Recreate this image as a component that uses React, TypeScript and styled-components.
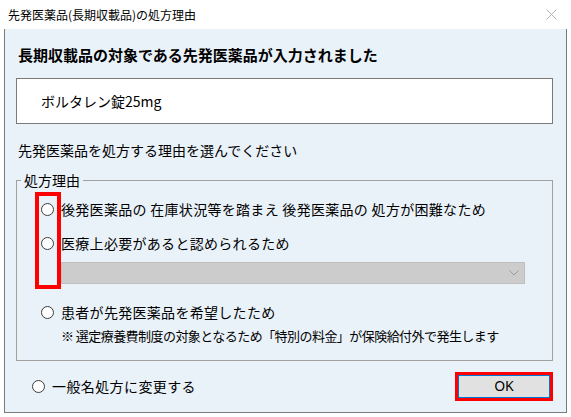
import React from 'react'
import styled, { createGlobalStyle } from 'styled-components'

const GlobalStyle = createGlobalStyle`
    html, body {
        margin: 0;
        padding: 0;
        background: #ffffff;
    }
    body {
        font-family: "Noto Sans CJK JP", "Noto Sans", sans-serif;
        color: #000000;
    }
`

const Window = styled.div`
    width: 571px;
    height: 417px;
    background: #ffffff;
    display: flex;
    flex-direction: column;
`

const TitleBar = styled.div`
    height: 29px;
    display: flex;
    align-items: center;
    justify-content: space-between;
    padding: 0 14px 0 8px;
    font-size: 12px;
    color: #000000;
`

const CloseIcon = styled.svg`
    width: 11px;
    height: 11px;
`

const Body = styled.div`
    box-sizing: border-box;
    margin-left: 4px;
    width: 563px;
    height: 384px;
    background: #eaf2f9;
    border: 1px solid #7a7a7a;
    border-top: none;
    padding: 0 13px 0 11px;
    display: flex;
    flex-direction: column;
`

const Heading = styled.div`
    margin-top: 15px;
    padding-left: 2px;
    font-size: 15px;
    font-weight: 700;
    line-height: 22px;
`

const DrugBox = styled.div`
    box-sizing: border-box;
    margin-top: 12px;
    height: 46px;
    background: #ffffff;
    border: 1px solid #7a7a7a;
    display: flex;
    align-items: center;
    padding-left: 24px;
    font-size: 14px;
`

const Instruction = styled.div`
    margin-top: 16px;
    padding-left: 2px;
    font-size: 14px;
    line-height: 20px;
`

const Group = styled.fieldset`
    margin: 11px 0 0 0;
    padding: 8px 0 14px 0;
    min-width: 0;
    border: 1px solid #a0a0a0;
    display: flex;
    flex-direction: column;
`

const Legend = styled.legend`
    margin-left: 4px;
    padding: 0 3px;
    font-size: 14px;
    line-height: 18px;
`

const Choices = styled.div`
    position: relative;
    display: flex;
    flex-direction: column;
    gap: 10px;
`

const Highlight = styled.div`
    position: absolute;
    left: 18px;
    top: -5px;
    width: 26px;
    height: 97px;
    box-sizing: border-box;
    border: 4px solid #ff0000;
    pointer-events: none;
`

const Option = styled.label<{ $indent: number }>`
    display: flex;
    align-items: center;
    gap: 7px;
    height: 24px;
    padding-left: ${({ $indent }) => $indent}px;
    font-size: 14px;
    letter-spacing: ${({ $indent }) => ($indent > 0 ? '0.3px' : '0.4px')};
    white-space: pre;
`

const RadioDot = styled.span`
    box-sizing: border-box;
    flex: none;
    width: 13px;
    height: 13px;
    border-radius: 50%;
    border: 1px solid #3c3c3c;
    background: #ffffff;
`

const Select = styled.div`
    box-sizing: border-box;
    margin: 7px 0 0 44px;
    width: 464px;
    height: 22px;
    background: #cccccc;
    border: 1px solid #bfbfbf;
    display: flex;
    align-items: center;
    justify-content: flex-end;
    padding-right: 5px;
`

const Chevron = styled.svg`
    width: 10px;
    height: 6px;
`

const LowerChoices = styled.div`
    margin-top: 16px;
    display: flex;
    flex-direction: column;
`

const Note = styled.div`
    margin-top: 2px;
    padding-left: 44px;
    font-size: 13px;
    letter-spacing: -0.55px;
    line-height: 20px;
    white-space: pre;
`

const Footer = styled.div`
    margin-top: 13px;
    display: flex;
    align-items: center;
    justify-content: space-between;
    padding-left: 16px;
    padding-right: 3px;
`

const OkButton = styled.button`
    box-sizing: border-box;
    width: 92px;
    height: 23px;
    background: #e1e1e1;
    border: 1px solid #0078d7;
    outline: 3px solid #ff0000;
    outline-offset: 0;
    font-family: "Noto Sans", "Noto Sans CJK JP", sans-serif;
    font-size: 14px;
    font-weight: 400;
    line-height: 1;
    color: #000000;
    padding: 0;
`

const reasons = [
    '後発医薬品の 在庫状況等を踏まえ 後発医薬品の 処方が困難なため',
    '医療上必要があると認められるため',
]

const App = () => {
    return (
        <Window>
            <GlobalStyle />
            <TitleBar>
                <span>先発医薬品(長期収載品)の処方理由</span>
                <CloseIcon viewBox="0 0 11 11">
                    <path d="M0.5 0.5 L10.5 10.5 M10.5 0.5 L0.5 10.5" stroke="#b4b4b4" strokeWidth="1" fill="none" />
                </CloseIcon>
            </TitleBar>
            <Body>
                <Heading>長期収載品の対象である先発医薬品が入力されました</Heading>
                <DrugBox>ボルタレン錠25mg</DrugBox>
                <Instruction>先発医薬品を処方する理由を選んでください</Instruction>
                <Group>
                    <Legend>処方理由</Legend>
                    <Choices>
                        {reasons.map((r) => (
                            <Option key={r} $indent={24}>
                                <RadioDot />
                                {r}
                            </Option>
                        ))}
                        <Highlight />
                    </Choices>
                    <Select>
                        <Chevron viewBox="0 0 10 6">
                            <path d="M0.5 0.5 L5 5 L9.5 0.5" stroke="#9a9a9a" strokeWidth="1" fill="none" />
                        </Chevron>
                    </Select>
                    <LowerChoices>
                        <Option $indent={24}>
                            <RadioDot />
                            患者が先発医薬品を希望したため
                        </Option>
                        <Note>※ 選定療養費制度の対象となるため「特別の料金」が保険給付外で発生します</Note>
                    </LowerChoices>
                </Group>
                <Footer>
                    <Option $indent={0}>
                        <RadioDot />
                        一般名処方に変更する
                    </Option>
                    <OkButton>OK</OkButton>
                </Footer>
            </Body>
        </Window>
    )
}

export default App
